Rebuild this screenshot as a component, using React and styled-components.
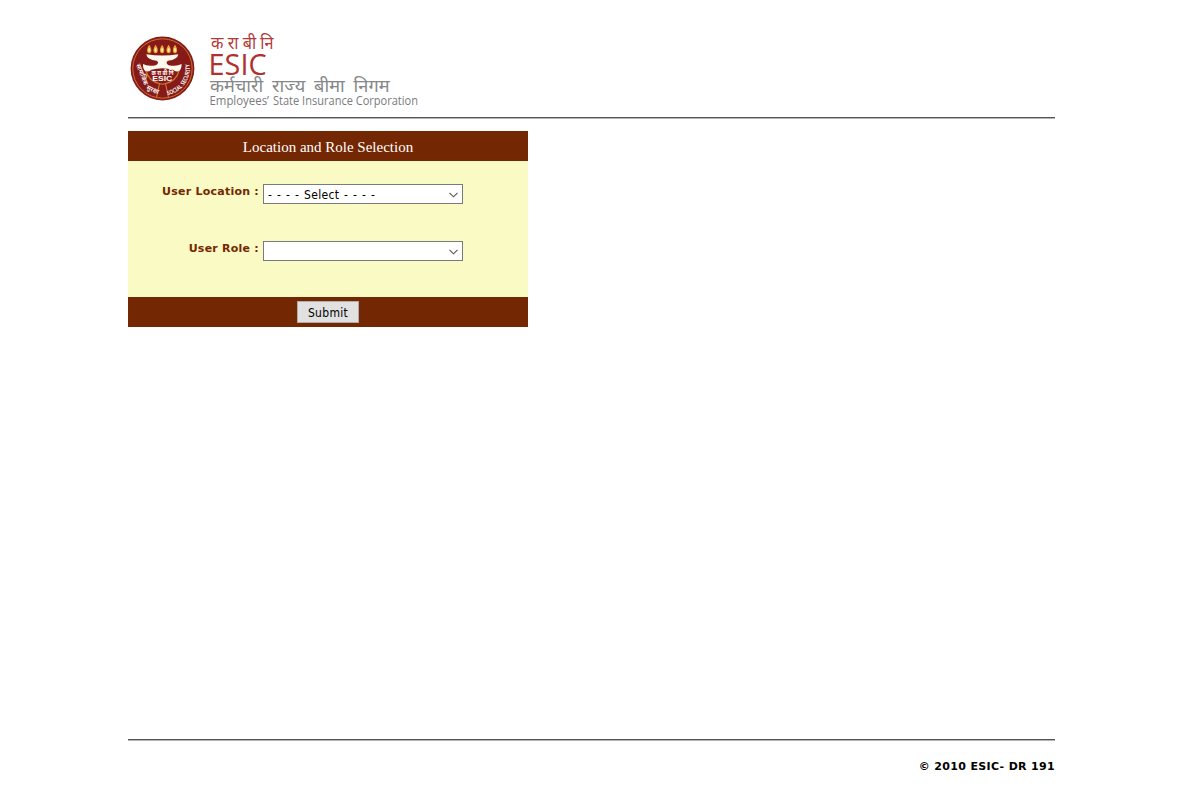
import React from "react";
import styled, { createGlobalStyle } from "styled-components";

const GlobalStyle = createGlobalStyle`
  * { box-sizing: border-box; }
  body { margin: 0; background: #fff; }
`;

const Page = styled.div`
  width: 927px;
  height: 791px;
  margin-left: 128px;
  display: flex;
  flex-direction: column;
`;

const Header = styled.header`
  height: 117px;
  padding-top: 30px;
`;

const Logo = styled.svg`
  display: block;
  width: 300px;
  height: 84px;
  overflow: visible;
`;

const Rule = styled.hr`
  width: 100%;
  height: 2px;
  margin: 0;
  border: 0;
  border-top: 1px solid #555;
  background: #b4b4b4;
`;

const Main = styled.main`
  flex: 1;
  padding-top: 12px;
`;

const Panel = styled.form`
  width: 400px;
  display: flex;
  flex-direction: column;
  background: #fafac4;
`;

const Bar = styled.div`
  height: 30px;
  display: flex;
  align-items: center;
  justify-content: center;
  background: #732702;
`;

const Title = styled.h1`
  margin: 0;
  padding-top: 2px;
  font: 400 15px/18px "Liberation Serif", serif;
  color: #fff;
`;

const Fields = styled.div`
  height: 136px;
  padding-top: 23px;
  display: flex;
  flex-direction: column;
  gap: 37px;
`;

const Field = styled.div`
  height: 20px;
  display: flex;
  gap: 4px;
`;

const Label = styled.label`
  width: 131px;
  padding-top: 1px;
  font: 700 11px/14px "DejaVu Sans", sans-serif;
  letter-spacing: 0.24px;
  text-align: right;
  white-space: nowrap;
  color: #732702;
`;

const SelectBox = styled.div`
  width: 200px;
  height: 20px;
  padding: 1px 4px 0;
  display: flex;
  align-items: center;
  justify-content: space-between;
  border: 1px solid #7a7a7a;
  background: #fff;
  font: 12px/18px "DejaVu Sans Condensed", "DejaVu Sans", sans-serif;
  letter-spacing: 0.3px;
  word-spacing: 1.1px;
  color: #000;
  white-space: pre;
`;

const Chevron = styled.svg`
  width: 9px;
  height: 6px;
  margin-top: 1px;
`;

const Submit = styled.button`
  width: 62px;
  height: 22px;
  padding: 1px 0 0;
  border: 1px solid #adadad;
  background: #e1e1e1;
  font: 12px/18px "DejaVu Sans Condensed", "DejaVu Sans", sans-serif;
  letter-spacing: 0.3px;
  color: #000;
`;

const Footer = styled.footer`
  height: 50px;
  padding-top: 19px;
  font: 700 11px/14px "DejaVu Sans", sans-serif;
  letter-spacing: 0.33px;
  text-align: right;
  color: #000;
`;

const hindi = '"Noto Sans Devanagari", "Noto Sans", sans-serif';

function EsicLogo() {
  return (
    <Logo viewBox="128 30 300 84" role="img" aria-label="ESIC">
      <defs>
        <path id="rightArc" d="M167.5 95.2A27.5 27.5 0 0 0 188.6 60" />
      </defs>
      <circle cx="162.5" cy="68.5" r="31.9" fill="#851a19" />
      <circle cx="162.5" cy="68.5" r="29.7" fill="none" stroke="#d57a32" strokeWidth="0.9" />
      {[149.2, 155.6, 162.1, 168.6, 175].map((x) => (
        <g key={x}>
          <path d={`M${x} 44.8C${x + 3} 49 ${x + 2.7} 53 ${x} 53.3C${x - 2.7} 53 ${x - 3} 49 ${x} 44.8Z`} fill="#f2a43b" />
          <ellipse cx={x} cy="50" rx="1" ry="2.1" fill="#fff6a0" />
        </g>
      ))}
      <path d="M146.3 54.2Q162.3 57 178.3 54.2Q177.5 59.6 168 60.8Q164.8 62.7 168.5 65.2Q177 66.8 181.5 64Q182 68.5 179 71.2Q175.5 72.2 173 69.8Q162.3 66.5 151.5 69.8Q149 72.2 145.5 71.2Q142.5 68.5 143 64Q147.5 66.8 156 65.2Q159.8 62.7 156.6 60.8Q147 59.6 146.3 54.2Z" fill="#fff9ed" />
      <path d="M146 71Q149 81.5 159.5 83.5L156.5 97.5M179 71Q176 81.5 165.5 83.5L168.5 97.5M159.5 83.5Q162.5 85 165.5 83.5" fill="none" stroke="#d57a32" strokeWidth="1.1" />
      <text x="151.5" y="75" textLength="22" lengthAdjust="spacingAndGlyphs" fontFamily={hindi} fontSize="6.5" fontWeight="700" fill="#fff">क रा बी नि</text>
      <text x="152.3" y="80.8" textLength="20" lengthAdjust="spacingAndGlyphs" fontFamily="Liberation Sans, sans-serif" fontSize="6.5" fontWeight="700" fill="#fff">ESIC</text>
      <text fontFamily={hindi} fontSize="6" fontWeight="600" fill="#fff">
        <textPath href="#rightArc" textLength="42" lengthAdjust="spacingAndGlyphs">SOCIAL SECURITY</textPath>
      </text>
      <g fontFamily={hindi} fontSize="6.5" fontWeight="600" fill="#fff">
        <text transform="translate(136 65) rotate(68)" textLength="22" lengthAdjust="spacingAndGlyphs">सामाजिक</text>
        <text transform="translate(146 89) rotate(24)" textLength="13" lengthAdjust="spacingAndGlyphs">सुरक्षा</text>
      </g>
      <text x="211" y="49" textLength="62.5" lengthAdjust="spacingAndGlyphs" fontFamily={hindi} fontSize="17.5" fill="#b03a38">क रा बी नि</text>
      <text x="208.6" y="74.6" textLength="58" lengthAdjust="spacingAndGlyphs" fontFamily="Open Sans, sans-serif" fontSize="28.5" fill="#b03230">ESIC</text>
      <text x="210" y="92.4" textLength="179.5" lengthAdjust="spacingAndGlyphs" fontFamily={hindi} fontSize="17.5" wordSpacing="4" fill="#858789">कर्मचारी राज्य बीमा निगम</text>
      <g fontFamily="Open Sans, sans-serif" fontSize="12" fill="#797b7e">
        <text x="209.5" y="105" textLength="59.5" lengthAdjust="spacingAndGlyphs">Employees’</text>
        <text x="273" y="105" textLength="145" lengthAdjust="spacingAndGlyphs">State Insurance Corporation</text>
      </g>
    </Logo>
  );
}

function Dropdown({ children }) {
  return (
    <SelectBox role="combobox">
      <span>{children}</span>
      <Chevron viewBox="0 0 9 6">
        <path d="M0.5 0.8L4.5 4.8L8.5 0.8" fill="none" stroke="#555" strokeWidth="1.1" />
      </Chevron>
    </SelectBox>
  );
}

export default function App() {
  return (
    <>
      <GlobalStyle />
      <Page>
        <Header>
          <EsicLogo />
        </Header>
        <Rule />
        <Main>
          <Panel onSubmit={(e) => e.preventDefault()}>
            <Bar>
              <Title>Location and Role Selection</Title>
            </Bar>
            <Fields>
              <Field>
                <Label>User Location :</Label>
                <Dropdown>- - - - Select - - - -</Dropdown>
              </Field>
              <Field>
                <Label>User Role :</Label>
                <Dropdown />
              </Field>
            </Fields>
            <Bar>
              <Submit>Submit</Submit>
            </Bar>
          </Panel>
        </Main>
        <Rule />
        <Footer>© 2010 ESIC- DR 191</Footer>
      </Page>
    </>
  );
}
